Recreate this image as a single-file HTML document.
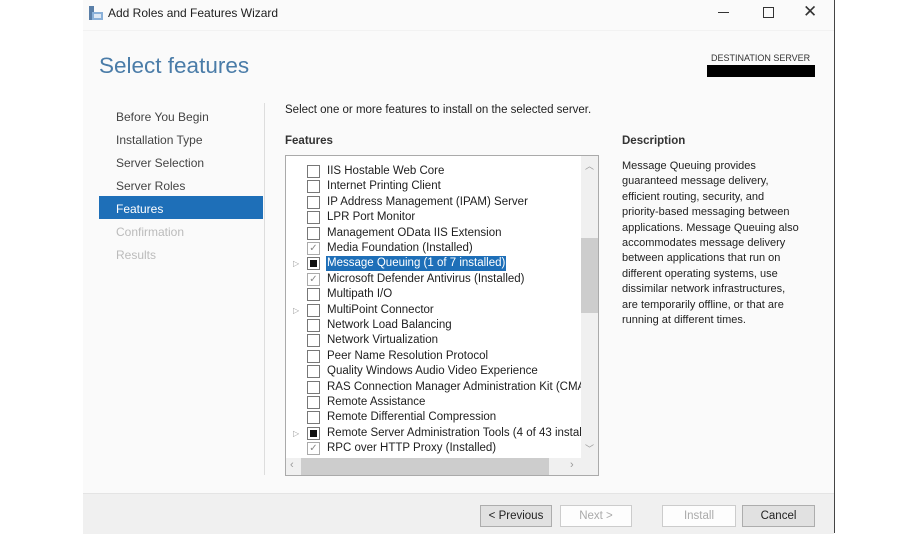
<!DOCTYPE html><html><head><style>
body{margin:0;width:920px;height:533px;background:#fff;font-family:"Liberation Sans",sans-serif;position:relative;overflow:hidden;color:#1e1e1e}
.a{position:absolute}
.win{left:83px;top:0;width:751px;height:533px;background:#fafafa;border-right:1px solid #444}
.nav{font-size:12px;color:#444;left:116px}
.row{position:absolute;left:0;height:15px;font-size:11.5px;line-height:15px;white-space:nowrap}
.cb{position:absolute;left:21px;top:1px;width:11px;height:11px;border:1px solid #777;background:#fff}
.cb.f::after{content:"";position:absolute;left:2px;top:2px;width:7px;height:7px;background:#111}
.cb.c{border-color:#aaa;color:#888;font-size:10px;line-height:11px;text-align:center}
.t{position:absolute;left:41px}
.ar{position:absolute;left:7px;top:0;font-size:8px;color:#999}
.btn{position:absolute;top:505px;height:20px;border:1px solid #ccc;background:#fdfdfd;font-size:11.5px;line-height:20px;text-align:center;color:#aaa}
</style></head><body>
<div class="a win"></div>
<div class="a" style="left:83px;top:30px;width:751px;height:1px;background:#f2f2f2"></div>
<svg class="a" style="left:88px;top:5px" width="16" height="16"><rect x="1" y="1" width="5" height="14" fill="#5a7fa8"/><rect x="4" y="7" width="11" height="8" fill="#8ab0d8"/><rect x="6" y="9" width="7" height="4" fill="#dde8f4"/></svg>
<div class="a" style="left:108px;top:6px;font-size:12px">Add Roles and Features Wizard</div>
<div class="a" style="left:718px;top:12px;width:11px;height:1px;background:#333"></div>
<div class="a" style="left:763px;top:7px;width:9px;height:9px;border:1px solid #333"></div>
<div class="a" style="left:803px;top:2px;font-size:17px;color:#333">✕</div>
<div class="a" style="left:99px;top:53px;font-size:22.5px;color:#4a7ca8">Select features</div>
<div class="a" style="left:711px;top:53px;font-size:9px;color:#333">DESTINATION SERVER</div>
<div class="a" style="left:707px;top:65px;width:108px;height:12px;background:#000"></div>
<div class="a nav" style="top:110px">Before You Begin</div>
<div class="a nav" style="top:133px">Installation Type</div>
<div class="a nav" style="top:156px">Server Selection</div>
<div class="a nav" style="top:179px">Server Roles</div>
<div class="a" style="left:99px;top:196px;width:164px;height:23px;background:#1e6fb8"></div>
<div class="a nav" style="top:202px;color:#fff">Features</div>
<div class="a nav" style="top:225px;color:#bbb">Confirmation</div>
<div class="a nav" style="top:248px;color:#bbb">Results</div>
<div class="a" style="left:264px;top:103px;width:1px;height:372px;background:#ddd"></div>
<div class="a" style="left:285px;top:104px;font-size:11.5px">Select one or more features to install on the selected server.</div>
<div class="a" style="left:285px;top:135px;font-size:11.5px;font-weight:bold;color:#333">Features</div>
<div class="a" style="left:622px;top:135px;font-size:11.5px;font-weight:bold;color:#333">Description</div>
<div class="a" style="left:622px;top:159px;width:180px;font-size:11px;line-height:15.4px;color:#222">Message Queuing provides guaranteed message delivery, efficient routing, security, and priority-based messaging between applications. Message Queuing also accommodates message delivery between applications that run on different operating systems, use dissimilar network infrastructures, are temporarily offline, or that are running at different times.</div>
<div class="a" style="left:285px;top:155px;width:312px;height:319px;border:1px solid #aaa;background:#fff;overflow:hidden">
<div class="a" style="left:0;top:0;width:295px;height:302px;overflow:hidden">
<div class="row" style="top:8px"><span class="cb"></span><span class="t">IIS Hostable Web Core</span></div>
<div class="row" style="top:23.4px"><span class="cb"></span><span class="t">Internet Printing Client</span></div>
<div class="row" style="top:38.8px"><span class="cb"></span><span class="t">IP Address Management (IPAM) Server</span></div>
<div class="row" style="top:54.2px"><span class="cb"></span><span class="t">LPR Port Monitor</span></div>
<div class="row" style="top:69.6px"><span class="cb"></span><span class="t">Management OData IIS Extension</span></div>
<div class="row" style="top:85px"><span class="cb c">✓</span><span class="t">Media Foundation (Installed)</span></div>
<div class="row" style="top:100.4px"><span class="ar">▷</span><span class="cb f"></span><span class="t" style="background:#1e6fb8;color:#fff;padding:0 1px;margin-left:-1px">Message Queuing (1 of 7 installed)</span></div>
<div class="row" style="top:115.8px"><span class="cb c">✓</span><span class="t">Microsoft Defender Antivirus (Installed)</span></div>
<div class="row" style="top:131.2px"><span class="cb"></span><span class="t">Multipath I/O</span></div>
<div class="row" style="top:146.6px"><span class="ar">▷</span><span class="cb"></span><span class="t">MultiPoint Connector</span></div>
<div class="row" style="top:162px"><span class="cb"></span><span class="t">Network Load Balancing</span></div>
<div class="row" style="top:177.4px"><span class="cb"></span><span class="t">Network Virtualization</span></div>
<div class="row" style="top:192.8px"><span class="cb"></span><span class="t">Peer Name Resolution Protocol</span></div>
<div class="row" style="top:208.2px"><span class="cb"></span><span class="t">Quality Windows Audio Video Experience</span></div>
<div class="row" style="top:223.6px"><span class="cb"></span><span class="t">RAS Connection Manager Administration Kit (CMAK)</span></div>
<div class="row" style="top:239px"><span class="cb"></span><span class="t">Remote Assistance</span></div>
<div class="row" style="top:254.4px"><span class="cb"></span><span class="t">Remote Differential Compression</span></div>
<div class="row" style="top:269.8px"><span class="ar">▷</span><span class="cb f"></span><span class="t">Remote Server Administration Tools (4 of 43 installed)</span></div>
<div class="row" style="top:285.2px"><span class="cb c">✓</span><span class="t">RPC over HTTP Proxy (Installed)</span></div>
</div>
<div class="a" style="left:295px;top:0;width:17px;height:302px;background:#f0f0f0"></div>
<div class="a" style="left:295px;top:82px;width:17px;height:75px;background:#cdcdcd"></div>
<div class="a" style="left:299px;top:3px;font-size:9px;color:#999">︿</div>
<div class="a" style="left:299px;top:286px;font-size:9px;color:#999">﹀</div>
<div class="a" style="left:0;top:302px;width:312px;height:17px;background:#f0f0f0"></div>
<div class="a" style="left:15px;top:302px;width:248px;height:17px;background:#cdcdcd"></div>
<div class="a" style="left:4px;top:303px;font-size:11px;color:#999">‹</div>
<div class="a" style="left:284px;top:303px;font-size:11px;color:#999">›</div>
</div>
<div class="a" style="left:83px;top:493px;width:751px;height:40px;background:#f0f0f0;border-top:1px solid #e4e4e4"></div>
<div class="btn" style="left:480px;width:70px;border-color:#adadad;background:#e1e1e1;color:#222">&lt; Previous</div>
<div class="btn" style="left:560px;width:70px">Next &gt;</div>
<div class="btn" style="left:662px;width:72px">Install</div>
<div class="btn" style="left:742px;width:71px;border-color:#adadad;background:#e1e1e1;color:#222">Cancel</div>
</body></html>
